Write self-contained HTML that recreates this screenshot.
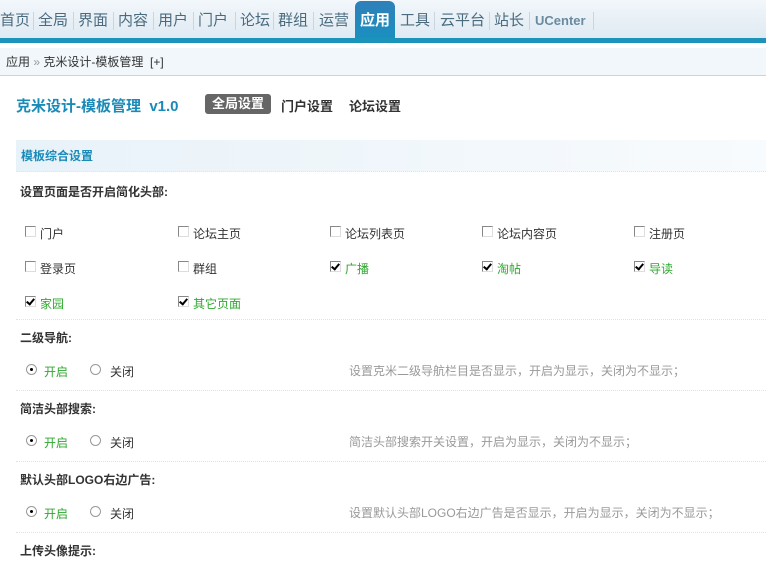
<!DOCTYPE html>
<html><head><meta charset="utf-8"><style>
*{margin:0;padding:0;box-sizing:border-box}
body{width:766px;height:575px;overflow:hidden;background:#fff;font-family:"Liberation Sans","Noto Sans CJK SC","WenQuanYi Zen Hei",sans-serif;font-size:12px;color:#333;position:relative}
.a{position:absolute;white-space:nowrap}
#nav{position:absolute;left:0;top:0;width:766px;height:38px;background:linear-gradient(#f2f7fb,#dfeaf2)}
#line{position:absolute;left:0;top:38px;width:766px;height:5px;background:#1b93bb}
.n{position:absolute;top:11px;font-size:15px;color:#4a6a7e;line-height:20px}
.sep{position:absolute;top:12px;width:1px;height:18px;background:#c9d6df}
#act{position:absolute;left:355px;top:1px;width:40px;height:37px;border-radius:6px 6px 0 0;background:linear-gradient(#2f7fb8,#1a8fc0);color:#fff;font-size:15px;font-weight:bold;text-align:center;line-height:20px;padding-top:10px}
#bc{position:absolute;left:0;top:48px;width:766px;height:28px;background:#f1f7fb;border-bottom:1px solid #c7d5dd;font-size:12px;line-height:28px;padding-left:6px;color:#333}
.sh{position:absolute;left:16px;top:140px;width:750px;height:32px;background:linear-gradient(90deg,#e8f2f9,#f8fbfd);border-bottom:1px dotted #dde6ec;color:#1a8bb8;font-weight:bold;line-height:32px;padding-left:5px}
.lbl{font-weight:bold;color:#333;left:20px}
.cb{position:absolute;width:11px;height:11px;border:1px solid #888;border-color:#888 #ddd #ddd #888;background:#fff;overflow:hidden}
.cb.on::after{content:"";position:absolute;left:2px;top:0px;width:3px;height:6px;border:solid #000;border-width:0 2px 2px 0;transform:rotate(40deg)}
.g{color:#2fa82f}
.rd{position:absolute;width:11px;height:11px;border-radius:50%;border:1px solid #999;background:#fff}
.rd.on::after{content:"";position:absolute;left:3px;top:3px;width:3px;height:3px;border-radius:50%;background:#000}
.hr{position:absolute;left:16px;width:750px;border-top:1px dotted #dde3e8}
.d{color:#999;left:349px}
</style></head><body>
<div id="nav"></div><div id="line"></div>
<div class="n" style="left:0">首页</div><div class="sep" style="left:33px"></div>
<div class="n" style="left:38px">全局</div><div class="sep" style="left:73px"></div>
<div class="n" style="left:78px">界面</div><div class="sep" style="left:113px"></div>
<div class="n" style="left:118px">内容</div><div class="sep" style="left:153px"></div>
<div class="n" style="left:158px">用户</div><div class="sep" style="left:193px"></div>
<div class="n" style="left:198px">门户</div><div class="sep" style="left:235px"></div>
<div class="n" style="left:240px">论坛</div><div class="sep" style="left:273px"></div>
<div class="n" style="left:278px">群组</div><div class="sep" style="left:313px"></div>
<div class="n" style="left:319px">运营</div>
<div id="act">应用</div>
<div class="n" style="left:400px">工具</div><div class="sep" style="left:434px"></div>
<div class="n" style="left:440px">云平台</div><div class="sep" style="left:489px"></div>
<div class="n" style="left:494px">站长</div><div class="sep" style="left:529px"></div>
<div class="n" style="left:535px;font-size:13px;font-weight:bold;color:#6a8aa0">UCenter</div><div class="sep" style="left:593px"></div>
<div id="bc">应用 <span style="color:#999">»</span> 克米设计-模板管理 &nbsp;[+]</div>
<div class="a" style="left:16px;top:95px;font-size:15px;font-weight:bold;color:#1a8bb8">克米设计-模板管理 &nbsp;v1.0</div>
<div class="a" style="left:205px;top:94px;width:66px;height:20px;background:#666;border-radius:3px;color:#fff;font-weight:bold;font-size:13px;text-align:center;line-height:20px">全局设置</div>
<div class="a" style="left:281px;top:96px;font-weight:bold;font-size:13px">门户设置</div>
<div class="a" style="left:349px;top:96px;font-weight:bold;font-size:13px">论坛设置</div>
<div class="sh">模板综合设置</div>
<div class="a lbl" style="top:183px">设置页面是否开启简化头部:</div>
<div class="cb" style="left:25px;top:226px"></div><div class="a" style="left:40px;top:225px">门户</div>
<div class="cb" style="left:178px;top:226px"></div><div class="a" style="left:193px;top:225px">论坛主页</div>
<div class="cb" style="left:330px;top:226px"></div><div class="a" style="left:345px;top:225px">论坛列表页</div>
<div class="cb" style="left:482px;top:226px"></div><div class="a" style="left:497px;top:225px">论坛内容页</div>
<div class="cb" style="left:634px;top:226px"></div><div class="a" style="left:649px;top:225px">注册页</div>
<div class="cb" style="left:25px;top:261px"></div><div class="a" style="left:40px;top:260px">登录页</div>
<div class="cb" style="left:178px;top:261px"></div><div class="a" style="left:193px;top:260px">群组</div>
<div class="cb on" style="left:330px;top:261px"></div><div class="a g" style="left:345px;top:260px">广播</div>
<div class="cb on" style="left:482px;top:261px"></div><div class="a g" style="left:497px;top:260px">淘帖</div>
<div class="cb on" style="left:634px;top:261px"></div><div class="a g" style="left:649px;top:260px">导读</div>
<div class="cb on" style="left:25px;top:296px"></div><div class="a g" style="left:40px;top:295px">家园</div>
<div class="cb on" style="left:178px;top:296px"></div><div class="a g" style="left:193px;top:295px">其它页面</div>
<div class="hr" style="top:319px"></div>
<div class="a lbl" style="top:329px">二级导航:</div>
<div class="rd on" style="left:26px;top:364px"></div><div class="a g" style="left:44px;top:363px">开启</div>
<div class="rd" style="left:90px;top:364px"></div><div class="a" style="left:110px;top:363px">关闭</div>
<div class="a d" style="top:362px">设置克米二级导航栏目是否显示，开启为显示，关闭为不显示；</div>
<div class="hr" style="top:390px"></div>
<div class="a lbl" style="top:400px">简洁头部搜索:</div>
<div class="rd on" style="left:26px;top:435px"></div><div class="a g" style="left:44px;top:434px">开启</div>
<div class="rd" style="left:90px;top:435px"></div><div class="a" style="left:110px;top:434px">关闭</div>
<div class="a d" style="top:433px">简洁头部搜索开关设置，开启为显示，关闭为不显示；</div>
<div class="hr" style="top:461px"></div>
<div class="a lbl" style="top:471px">默认头部LOGO右边广告:</div>
<div class="rd on" style="left:26px;top:506px"></div><div class="a g" style="left:44px;top:505px">开启</div>
<div class="rd" style="left:90px;top:506px"></div><div class="a" style="left:110px;top:505px">关闭</div>
<div class="a d" style="top:504px">设置默认头部LOGO右边广告是否显示，开启为显示，关闭为不显示；</div>
<div class="hr" style="top:532px"></div>
<div class="a lbl" style="top:542px">上传头像提示:</div>
</body></html>
